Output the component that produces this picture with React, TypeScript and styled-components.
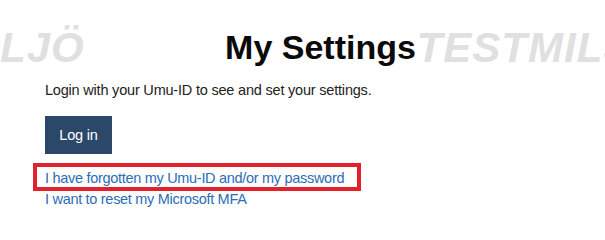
import styled, { createGlobalStyle } from "styled-components";

//style

const GlobalStyle = createGlobalStyle`
  html, body {
    margin: 0;
    padding: 0;
    background: #fff;
  }
  body {
    font-family: "Liberation Sans", Arial, sans-serif;
    overflow: hidden;
  }
`;

const Page = styled.div`
  position: relative;
  width: 605px;
  height: 235px;
  overflow: hidden;
`;

const WatermarkRow = styled.div`
  position: absolute;
  top: 27px;
  left: -160px;
  display: flex;
  gap: 332px;
  white-space: nowrap;
  pointer-events: none;
  z-index: 0;
`;

const Watermark = styled.span`
  font-size: 42px;
  line-height: 42px;
  font-weight: 700;
  font-style: italic;
  letter-spacing: 1px;
  color: #e0e0e0;
`;

const Main = styled.main`
  position: relative;
  z-index: 1;
  box-sizing: border-box;
  width: 605px;
  padding: 27px 9px 0 45px;
  display: flex;
  flex-direction: column;
  align-items: flex-start;
`;

const Title = styled.h1`
  align-self: stretch;
  margin: 0;
  text-align: center;
  font-size: 34px;
  line-height: 40px;
  font-weight: 700;
  color: #0a0a0a;
`;

const Intro = styled.p`
  margin: 13px 0 0;
  font-size: 14.5px;
  line-height: 20px;
  letter-spacing: -0.2px;
  color: #222;
`;

const Button = styled.button`
  margin-top: 16px;
  box-sizing: border-box;
  width: 67px;
  height: 38px;
  padding: 0;
  border: none;
  background: #2b4869;
  color: #fff;
  font-family: inherit;
  font-size: 14.5px;
  letter-spacing: -0.2px;
  cursor: pointer;
`;

const Highlight = styled.div`
  box-sizing: border-box;
  margin: 9px 0 0 -12px;
  width: 328px;
  height: 28px;
  padding-left: 8px;
  border: 4px solid #e2212b;
`;

const Link = styled.a<{ $boxed?: boolean }>`
  display: block;
  margin-top: ${(p) => (p.$boxed ? "0" : "-2px")};
  font-size: 14.5px;
  line-height: ${(p) => (p.$boxed ? "22px" : "21px")};
  letter-spacing: -0.3px;
  color: #2d6cb5;
  text-decoration: none;
  white-space: nowrap;
`;

//

function App() {
  return (
    <>
      <GlobalStyle />
      <Page>
        <WatermarkRow>
          <Watermark>TESTMILJÖ</Watermark>
          <Watermark>TESTMILJÖ</Watermark>
        </WatermarkRow>
        <Main>
          <Title>My Settings</Title>
          <Intro>Login with your Umu-ID to see and set your settings.</Intro>
          <Button type="button">Log in</Button>
          <Highlight>
            <Link href="#" $boxed>
              I have forgotten my Umu-ID and/or my password
            </Link>
          </Highlight>
          <Link href="#">I want to reset my Microsoft MFA</Link>
        </Main>
      </Page>
    </>
  );
}

export default App;
